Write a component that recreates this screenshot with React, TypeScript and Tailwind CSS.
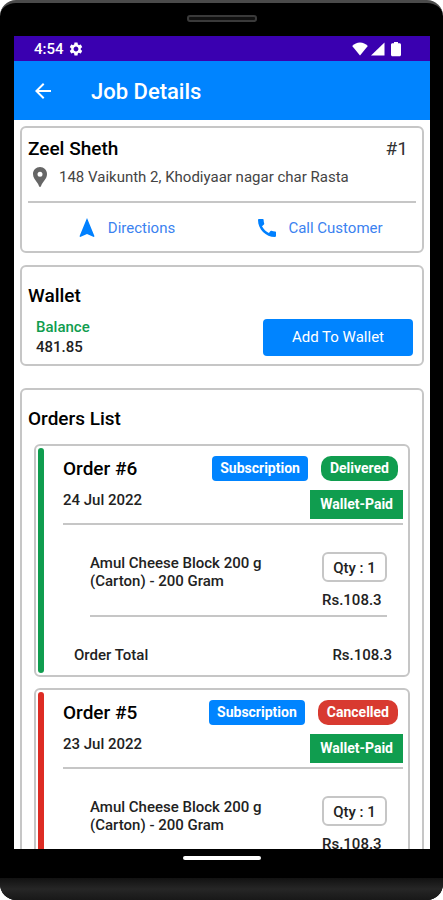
import { MdArrowBack, MdCall, MdLocationPin, MdNavigation, MdSettings } from 'react-icons/md';

interface Order {
  id: number;
  date: string;
  status: 'Delivered' | 'Cancelled';
  item: string;
  qty: number;
  price: string;
}

const orders: Order[] = [
  { id: 6, date: '24 Jul 2022', status: 'Delivered', item: 'Amul Cheese Block 200 g (Carton) - 200 Gram', qty: 1, price: 'Rs.108.3' },
  { id: 5, date: '23 Jul 2022', status: 'Cancelled', item: 'Amul Cheese Block 200 g (Carton) - 200 Gram', qty: 1, price: 'Rs.108.3' },
];

function StatusBar() {
  return (
    <div className="flex h-[25px] shrink-0 items-center bg-[#3a00b0] pl-5 pr-7 text-white">
      <span className="text-[15px] font-medium leading-5">4:54</span>
      <MdSettings className="ml-1 size-4" />
      <div className="ml-auto flex items-center gap-0.5">
        <svg className="h-4 w-4" viewBox="0 0 16 16" fill="currentColor">
          <path d="M8 14.500 .2 5C2.400 2.800 5 1.600 8 1.600S13.600 2.800 15.800 5z" />
        </svg>
        <svg className="h-4 w-4" viewBox="0 0 16 16" fill="currentColor">
          <path d="M1 14.500 14.500 1.500v13z" />
        </svg>
        <svg className="ml-0.5 h-4 w-3" viewBox="0 0 12 16" fill="currentColor">
          <path d="M4 1h4v1.200h1.500c.9 0 1.500.6 1.500 1.500v10c0 .9-.6 1.500-1.500 1.500h-7c-.9 0-1.500-.6-1.500-1.500v-10c0-.9.6-1.500 1.500-1.500H4z" />
        </svg>
      </div>
    </div>
  );
}

function CustomerCard() {
  return (
    <section className="rounded-md border-2 border-[#c6c6c6] px-1.5 pb-[11px] pt-[9px]">
      <div className="flex items-center justify-between pr-2 text-[19px] leading-6">
        <h2 className="font-medium">Zeel Sheth</h2>
        <span className="text-[#333]">#1</span>
      </div>
      <p className="mt-1 flex items-center text-[15px] leading-6 text-[#444]">
        <MdLocationPin className="size-6 shrink-0 text-[#666]" />
        <span className="ml-[7px]">148 Vaikunth 2, Khodiyaar nagar char Rasta</span>
      </p>
      <hr className="mt-3 border-t-2 border-[#c6c6c6]" />
      <div className="mt-[13px] grid grid-cols-2 text-[15px] leading-6 text-[#3b82f0]">
        <a href="#directions" className="flex items-center justify-center gap-[9px]">
          <MdNavigation className="size-6 text-[#0080ff]" />
          Directions
        </a>
        <a href="#call" className="flex items-center justify-center gap-[9px]">
          <MdCall className="size-6 text-[#0080ff]" />
          Call Customer
        </a>
      </div>
    </section>
  );
}

function WalletCard() {
  return (
    <section className="mt-3 rounded-md border-2 border-[#c6c6c6] px-1.5 pb-[7px] pt-[17px]">
      <h2 className="text-[19px] font-medium leading-6">Wallet</h2>
      <div className="mt-[9px] flex items-center justify-between pl-2 pr-[3px]">
        <div className="text-[15px] font-medium leading-5">
          <p className="text-[#109d4f]">Balance</p>
          <p className="text-[#222]">481.85</p>
        </div>
        <button className="h-[37px] w-[150px] rounded-[4px] bg-[#0084ff] text-[15px] text-white">Add To Wallet</button>
      </div>
    </section>
  );
}

function OrderCard({ order }: { order: Order }) {
  const delivered = order.status === 'Delivered';
  return (
    <article className="flex rounded-md border-2 border-[#c6c6c6] p-0.5 pr-[5px]">
      <div className={`w-1.5 shrink-0 rounded-full ${delivered ? 'bg-[#109d4f]' : 'bg-[#dd2c24]'}`} />
      <div className="min-w-0 flex-1 pl-[19px] text-[#222]">
        <div className="flex items-center pr-[5px] pt-2">
          <h3 className="text-[19px] font-medium leading-6 text-black">Order #{order.id}</h3>
          <span className="ml-auto h-[25px] rounded-[4px] bg-[#0084ff] px-2 text-sm font-bold leading-[25px] text-white">
            Subscription
          </span>
          <span
            className={`ml-[13px] h-[25px] rounded-[10px] px-[9px] text-sm font-bold leading-[25px] text-white ${delivered ? 'bg-[#109d4f]' : 'bg-[#d83a30]'}`}
          >
            {order.status}
          </span>
        </div>
        <div className="mt-[9px] flex items-start justify-between">
          <p className="text-[15px] font-medium leading-5">{order.date}</p>
          <span className="h-[29px] bg-[#109d4f] px-2.5 text-sm font-bold leading-[29px] text-white">Wallet-Paid</span>
        </div>
        <hr className="mt-1 border-t-2 border-[#c6c6c6]" />
        <div className="ml-[27px] mr-4 mt-[27px] flex justify-between border-b-2 border-[#c6c6c6] pb-[5px] text-[15px] font-medium">
          <p className="w-48 pt-0.5 leading-[18px]">{order.item}</p>
          <div className="w-[65px]">
            <p className="h-[30px] rounded-md border-2 border-[#c6c6c6] text-center leading-7">Qty : {order.qty}</p>
            <p className="mt-2 leading-5">{order.price}</p>
          </div>
        </div>
        <div className="mx-[11px] mb-2 mt-7 flex justify-between text-[15px] font-medium leading-5">
          <span>Order Total</span>
          <span>{order.price}</span>
        </div>
      </div>
    </article>
  );
}

export default function App() {
  return (
    <div className="h-screen bg-white font-['Roboto',sans-serif] text-black">
      <div className="flex h-full flex-col overflow-hidden rounded-[16px] border-t-[3px] border-[#4a4a4a] bg-black">
        <div className="flex h-[33px] shrink-0 justify-center pt-3">
          <div className="h-[7px] w-[70px] rounded-[3px] border-2 border-[#3a3a3a] bg-[#111]" />
        </div>

        <main className="ml-3.5 mr-[13px] flex min-h-0 flex-1 flex-col overflow-hidden bg-white">
          <StatusBar />
          <header className="flex h-[59px] shrink-0 items-center bg-[#0084ff] pl-[17px] text-white">
            <button aria-label="Back">
              <MdArrowBack className="size-6" />
            </button>
            <h1 className="ml-9 pt-0.5 text-[22px] font-medium leading-7">Job Details</h1>
          </header>

          <div className="min-h-0 flex-1 overflow-hidden p-1.5">
            <CustomerCard />
            <WalletCard />
            <section className="mt-[22px] rounded-md border-2 border-[#c6c6c6] px-3 pb-3 pt-[17px]">
              <h2 className="-ml-1.5 text-[19px] font-medium leading-6">Orders List</h2>
              <div className="mt-[13px] flex flex-col gap-[11px]">
                {orders.map((order) => (
                  <OrderCard key={order.id} order={order} />
                ))}
              </div>
            </section>
          </div>
        </main>

        <div className="flex h-[29px] shrink-0 justify-center pt-[7px]">
          <div className="h-1 w-[78px] rounded-full bg-white" />
        </div>
        <div className="h-[22px] shrink-0 bg-linear-to-b from-[#121212] via-[#262626] to-[#181818]" />
      </div>
    </div>
  );
}
